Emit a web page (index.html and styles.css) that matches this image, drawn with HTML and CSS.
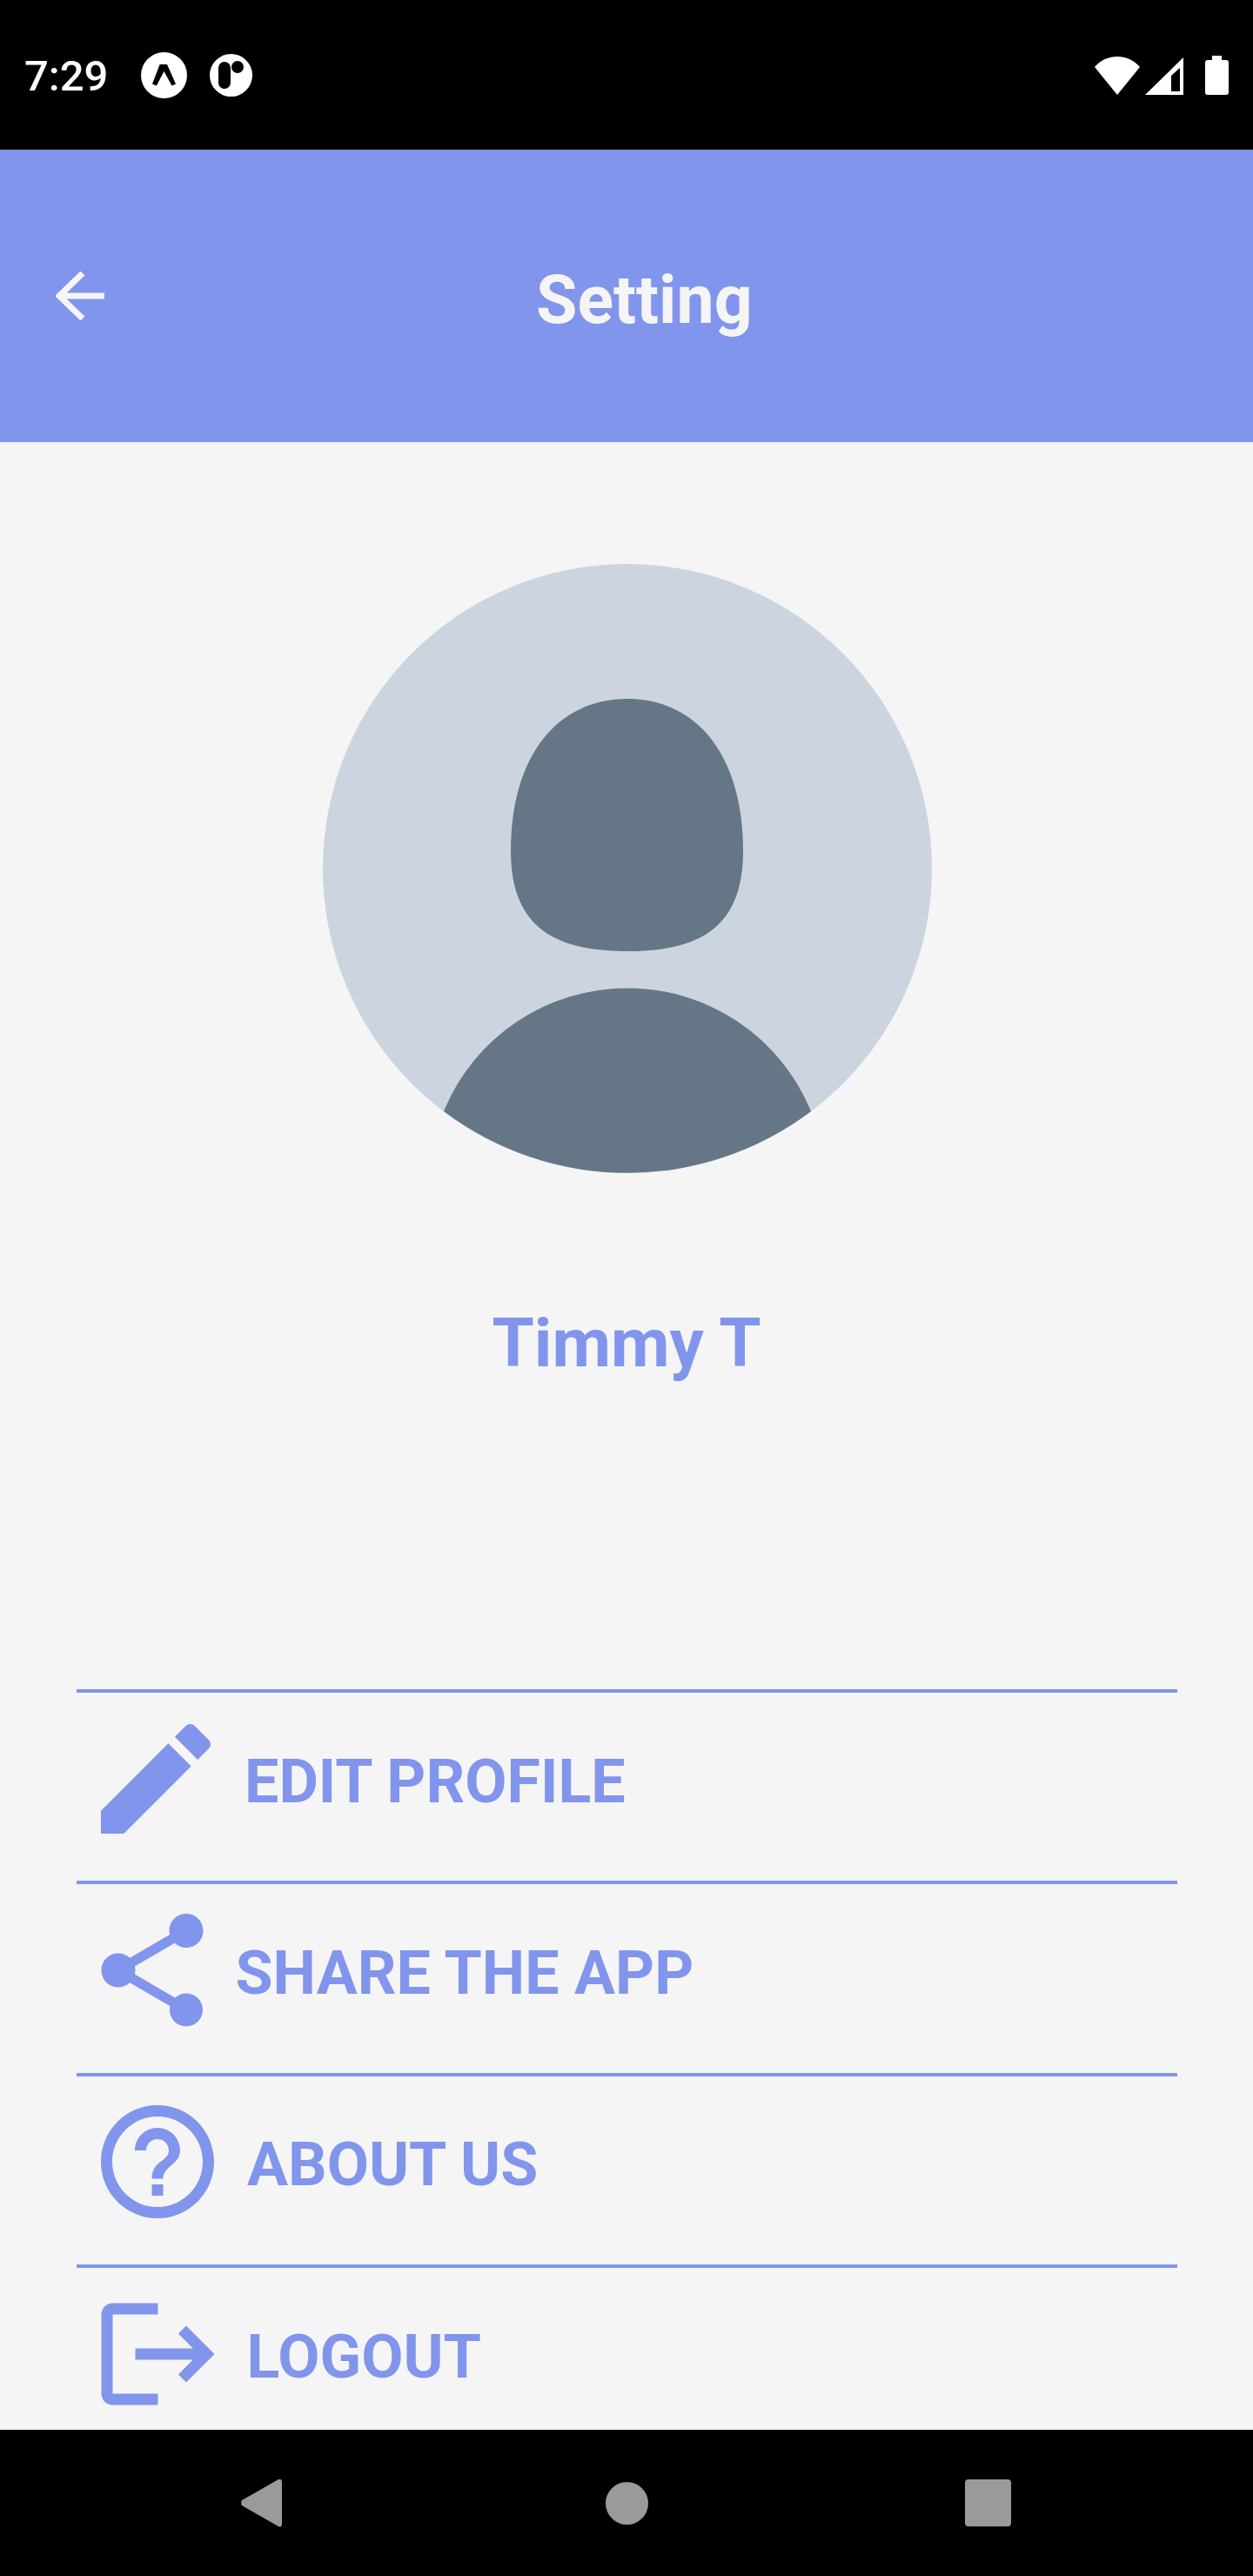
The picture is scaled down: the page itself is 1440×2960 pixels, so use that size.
FILE: index.html
```html
<!DOCTYPE html>
<html lang="en">
<head>
    <meta charset="UTF-8">
    <meta name="viewport" content="width=device-width, initial-scale=1.0">
    <title>Setting</title>
    <link rel="stylesheet" href="styles.css">
</head>
<body>
    <div class="phone">
        <div class="status-bar">
            <span class="time">7:29</span>
            <svg class="notif notif-a" viewBox="0 0 53 53">
                <path fill="#fff" fill-rule="evenodd" d="M26.500 0a26.500 26.500 0 1 0 0 53a26.500 26.500 0 1 0 0-53zM21.600 14H30L40 36.500L35.500 38.500L26.500 22L17.800 38.500L13 36.500z"/>
            </svg>
            <svg class="notif notif-b" viewBox="0 0 49 49">
                <path fill="#fff" fill-rule="evenodd" d="M24.500 0a24.500 24.500 0 1 0 0 49a24.500 24.500 0 1 0 0-49zM17 9a7 7 0 0 1 7 7v17a7 7 0 0 1-14 0V16a7 7 0 0 1 7-7zM32 8a7 7 0 1 1 0 14a7 7 0 1 1 0-14z"/>
            </svg>
            <div class="status-right">
                <svg class="wifi" viewBox="0 0 52 44"><path fill="#fff" d="M0 12C7 4 16 0 26 0s19 4 26 12L26 44z"/></svg>
                <svg class="signal" viewBox="0 0 44 43"><path fill="#fff" fill-rule="evenodd" d="M0 43L44 0v43zM30 21v18h10V12z"/></svg>
                <svg class="battery" viewBox="0 0 27 45"><path fill="#fff" d="M8 0h11v5h5a3 3 0 0 1 3 3v34a3 3 0 0 1-3 3H3a3 3 0 0 1-3-3V8a3 3 0 0 1 3-3h5z"/></svg>
            </div>
        </div>

        <div class="header">
            <svg class="back" viewBox="0 0 56 56">
                <path fill="none" stroke="#f5f5f5" stroke-width="7" d="M56 28H5M31 2L4 28l27 26" />
            </svg>
            <h1 class="title">Setting</h1>
        </div>

        <div class="content">
            <svg class="avatar" viewBox="0 0 700 700">
                <circle cx="350" cy="350" r="350" fill="#ccd5df"/>
                <path fill="#657786" d="M350 155C430 155 483 220 483 330C483 420 430 445 350 445C270 445 216 420 216 330C216 220 270 155 350 155z"/>
                <path fill="#657786" d="M139 629A228 228 0 0 1 561 629A350 350 0 0 1 139 629z"/>
            </svg>
            <p class="name">Timmy T</p>

            <div class="menu">
                <div class="row">
                    <svg class="icon icon-edit" viewBox="0 0 24 24"><path d="M3 17.250V21h3.750L17.810 9.940l-3.750-3.750L3 17.250zM20.710 7.040c.39-.39.39-1.020 0-1.410l-2.340-2.340c-.39-.39-1.020-.39-1.410 0l-1.830 1.830 3.750 3.750 1.830-1.830z"/></svg>
                    <span class="label label-edit">EDIT PROFILE</span>
                </div>
                <div class="row">
                    <svg class="icon icon-share" viewBox="0 0 24 24"><path d="M18 16.080c-.76 0-1.440.3-1.960.77L8.910 12.700c.05-.23.09-.46.09-.7s-.04-.47-.09-.7l7.050-4.110c.54.5 1.250.81 2.040.81 1.660 0 3-1.340 3-3s-1.340-3-3-3-3 1.340-3 3c0 .24.04.47.09.7L8.040 9.810C7.500 9.310 6.790 9 6 9c-1.660 0-3 1.340-3 3s1.340 3 3 3c.79 0 1.500-.31 2.040-.81l7.120 4.160c-.05.21-.08.43-.08.65 0 1.610 1.310 2.920 2.920 2.920 1.610 0 2.920-1.310 2.920-2.920s-1.310-2.920-2.920-2.920z"/></svg>
                    <span class="label label-share">SHARE THE APP</span>
                </div>
                <div class="row">
                    <svg class="icon icon-help" viewBox="0 0 24 24"><path d="M11 18h2v-2h-2v2zm1-16C6.480 2 2 6.480 2 12s4.480 10 10 10 10-4.480 10-10S17.520 2 12 2zm0 18c-4.410 0-8-3.590-8-8s3.590-8 8-8 8 3.590 8 8-3.590 8-8 8zm0-14c-2.210 0-4 1.790-4 4h2c0-1.100.9-2 2-2s2 .9 2 2c0 2-3 1.750-3 5h2c0-2.250 3-2.500 3-5 0-2.210-1.790-4-4-4z"/></svg>
                    <span class="label label-help">ABOUT US</span>
                </div>
                <div class="row">
                    <svg class="icon icon-logout" viewBox="0 0 24 24"><path d="M13 3H5C3.900 3 3 3.900 3 5v14c0 1.100.9 2 2 2h8v-2H5V5h8zM16.600 8.400L19.200 11H9v2h10.200l-2.600 2.600L18 17l5-5-5-5z"/></svg>
                    <span class="label label-logout">LOGOUT</span>
                </div>
            </div>
        </div>

        <div class="nav-bar">
            <svg class="nav-back" viewBox="0 0 48 56"><path fill="#9a9a9a" d="M1 25L43 1c2-1 4 0 4 3v48c0 3-2 4-4 3L1 31c-1-1-1-5 0-6z"/></svg>
            <div class="nav-home"></div>
            <div class="nav-recent"></div>
        </div>
    </div>
</body>
</html>
```

FILE: styles.css
```css
* {
    box-sizing: border-box;
}
body {
    margin: 0;
    font-family: 'Roboto', 'Liberation Sans', sans-serif;
    background-color: #f5f5f5;
}
.phone {
    width: 1440px;
    height: 2960px;
    display: flex;
    flex-direction: column;
    overflow: hidden;
}

/* status bar */
.status-bar {
    height: 172px;
    flex-shrink: 0;
    background-color: #000000;
    display: flex;
    align-items: center;
    padding-left: 28px;
    color: #ffffff;
}
.time {
    width: 134px;
    font-size: 49px;
    font-weight: 500;
    line-height: 58px;
    padding-top: 3px;
}
.notif {
    display: block;
}
.notif-a {
    width: 53px;
    height: 53px;
    margin-right: 26px;
}
.notif-b {
    width: 49px;
    height: 49px;
}
.status-right {
    margin-left: auto;
    padding-right: 28px;
    display: flex;
    align-items: flex-end;
    height: 45px;
}
.wifi {
    width: 52px;
    height: 44px;
    margin-right: 6px;
}
.signal {
    width: 44px;
    height: 43px;
    margin-right: 25px;
}
.battery {
    width: 27px;
    height: 45px;
}

/* header */
.header {
    height: 336px;
    flex-shrink: 0;
    background-color: #8295ec;
    display: flex;
    align-items: center;
    padding-left: 64px;
}
.back {
    width: 56px;
    height: 56px;
    flex-shrink: 0;
}
.title {
    margin: 0 0 0 496px;
    padding-top: 10px;
    font-size: 77px;
    font-weight: 700;
    line-height: 90px;
    color: #f5f5f5;
}

/* profile */
.content {
    flex: 1;
    min-height: 0;
    overflow: hidden;
    display: flex;
    flex-direction: column;
    align-items: center;
    padding-top: 140px;
}
.avatar {
    width: 700px;
    height: 700px;
    flex-shrink: 0;
    margin-left: 2px;
}
.name {
    margin: 141px 0 0 0;
    font-size: 78px;
    font-weight: 700;
    line-height: 110px;
    color: #8295ec;
}

/* menu */
.menu {
    width: 1265px;
    margin: 342px 0 0 1px;
    flex-shrink: 0;
}
.row {
    height: 220.33px;
    border-top: 4px solid #8295ec;
    display: flex;
    align-items: center;
    padding-bottom: 19px;
}
.icon {
    display: block;
    flex-shrink: 0;
    width: 156px;
    height: 156px;
    fill: #8295ec;
}
.icon-edit {
    width: 168px;
    height: 168px;
    margin-left: 7px;
}
.icon-share {
    margin-left: 8.5px;
}
.icon-help {
    margin-left: 15px;
}
.icon-logout {
    margin-left: 8.5px;
}
.label {
    font-size: 70px;
    font-weight: 700;
    line-height: 82px;
    padding-top: 6px;
    color: #8295ec;
}
.label-edit {
    margin-left: 18px;
}
.label-share {
    margin-left: 18px;
}
.label-help {
    margin-left: 25px;
}
.label-logout {
    margin-left: 31px;
}

/* bottom nav */
.nav-bar {
    height: 168px;
    flex-shrink: 0;
    background-color: #000000;
    display: flex;
    align-items: center;
    padding-left: 277px;
}
.nav-back {
    width: 48px;
    height: 56px;
}
.nav-home {
    width: 49px;
    height: 49px;
    margin-left: 371px;
    border-radius: 50%;
    background-color: #9a9a9a;
}
.nav-recent {
    width: 53px;
    height: 54px;
    margin-left: 364px;
    border-radius: 4px;
    background-color: #9a9a9a;
}
```
